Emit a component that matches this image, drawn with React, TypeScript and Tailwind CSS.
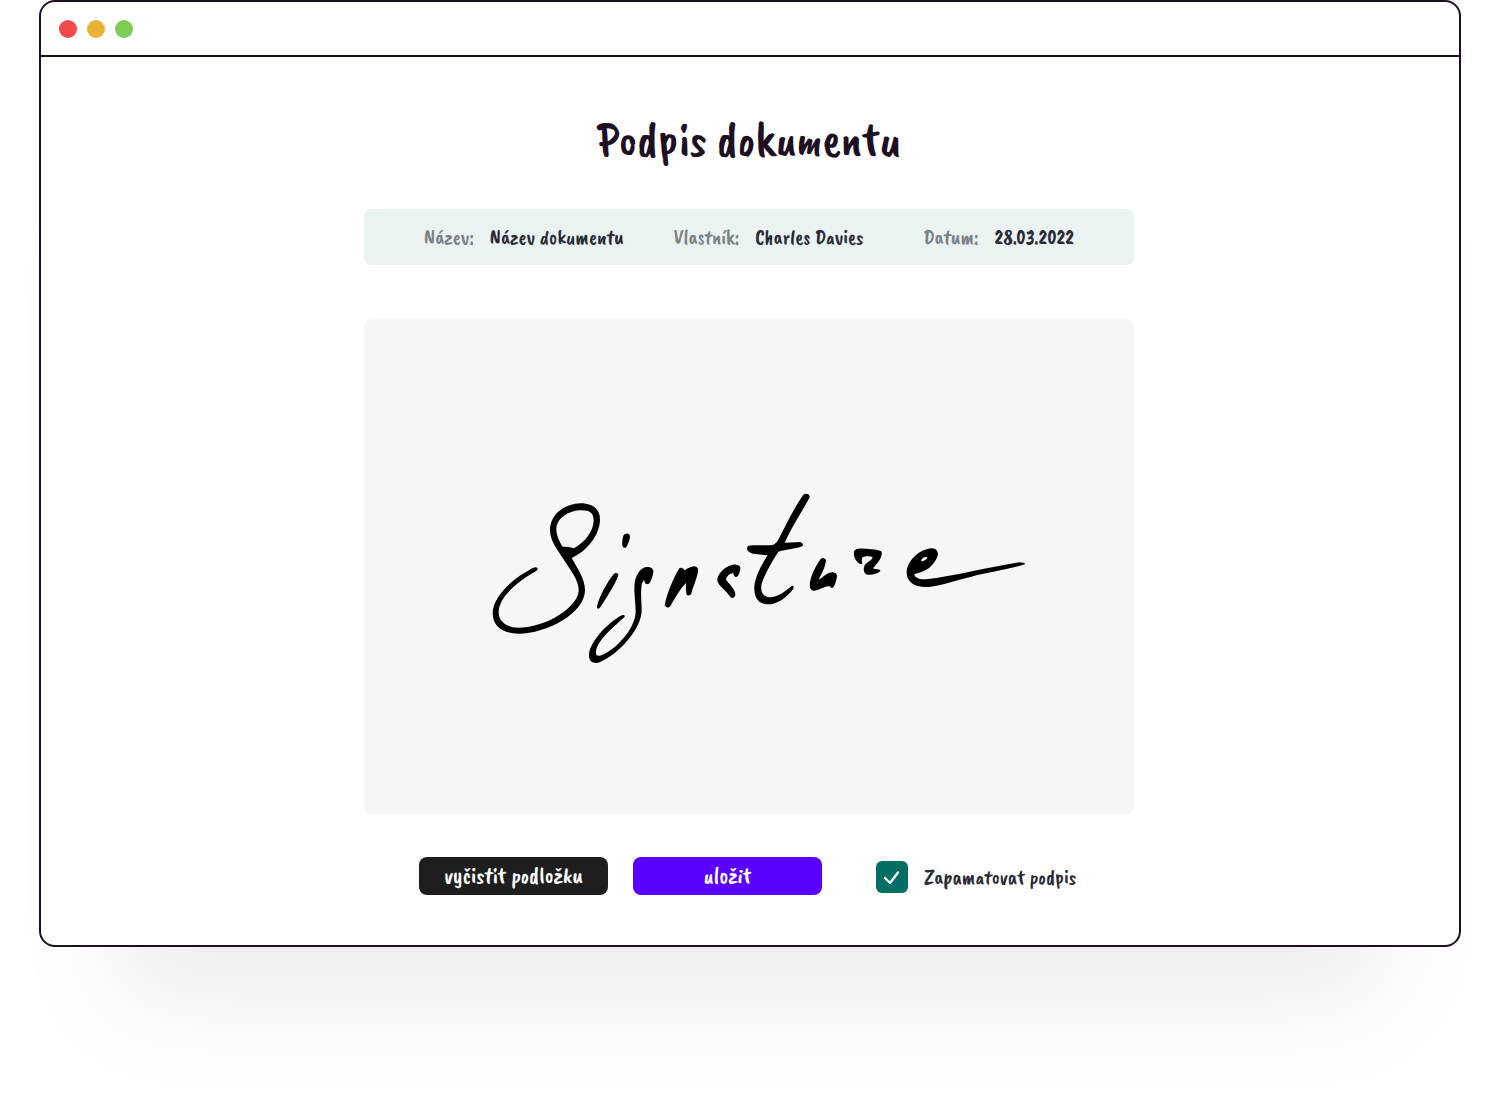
const details = [
  { label: "Název:", value: "Název dokumentu" },
  { label: "Vlastník:", value: "Charles Davies" },
  { label: "Datum:", value: "28.03.2022" },
];

function TitleBar() {
  return (
    <header className="flex h-[55px] items-center gap-2.5 border-b-2 border-[#1d1023] px-[18px]">
      <span className="size-[18px] rounded-full bg-[#f24a4a]" />
      <span className="size-[18px] rounded-full bg-[#eab234]" />
      <span className="size-[18px] rounded-full bg-[#7ccc55]" />
    </header>
  );
}

function Signature() {
  return (
    <svg viewBox="-33 -60 1680 640" className="w-[560px] max-w-full" role="img" aria-label="Signature" fill="#000">
      <path
        fillRule="evenodd"
        d="M164 262C112 286 38 344 38 400C38 440 70 461 115 461C200 461 315 400 315 330C315 295 290 262 275 234C320 215 360 165 360 118C360 85 335 70 302 70C250 72 210 105 210 150C210 185 235 212 252 240C270 268 296 300 296 330C296 380 200 443 115 443C80 443 56 425 56 397C56 350 118 300 170 272Q178 262 164 262ZM248 200C238 185 229 165 229 147C230 115 265 91 305 91C330 91 341 100 341 122C340 155 315 185 282 205C270 201 258 200 248 200Z"
      />
      <path d="M430 167C434 159 450 158 450 169C450 180 444 192 440 200C435 206 427 204 427 196C426 188 427 176 430 167Z" />
      <path d="M402 281C407 277 416 279 415 286C404 317 380 352 361 382C356 389 349 386 351 379C358 347 382 306 402 281Z" />
      <path d="M502 261C482 261 463 285 463 325C463 345 467 375 467 395C466 450 400 515 360 527C350 528 347 525 348 515C350 485 395 445 433 412Q437 404 428 405C400 415 328 480 327 525C326 545 340 551 355 548C410 528 485 450 485 390C485 370 482 340 484 325C484 312 487 305 493 300C493 315 505 316 511 306C515 297 521 280 520 272Q516 260 502 261Z" />
      <g transform="translate(480 0)">
        <path d="M118 265Q127 259 134 271C143 265 151 260 163 259Q176 260 174 274C171 297 158 322 154 341Q149 349 140 345Q136 327 138 309C120 327 104 356 91 379Q81 388 74 376C80 342 101 292 118 265Z" />
        <path d="M289 254C269 251 232 275 232 302C235 317 257 330 269 348C275 358 287 354 286 342C285 328 269 313 258 299C260 288 271 279 280 280C282 295 293 294 297 282C302 267 306 257 289 254Z" />
        <path d="M490 44C498 38 511 42 509 52C487 94 455 140 434 188L481 186Q491 190 488 198C471 206 438 208 415 215C394 248 369 291 364 317C361 344 377 355 397 351C419 347 437 333 456 317Q463 316 460 326C440 354 410 374 381 373C353 371 341 349 343 317C347 286 366 252 383 226L339 221C323 218 317 207 324 198C343 194 374 197 399 195C405 192 410 188 414 181C438 134 463 83 490 44Z" />
        <path d="M542 237Q550 230 558 239C557 261 544 281 536 299C550 292 564 275 579 277Q591 279 591 289C589 302 585 316 580 322Q575 327 569 319C556 315 538 332 520 332C508 330 509 317 510 307C515 281 529 255 542 237Z" />
      </g>
      <g transform="translate(930 120)">
        <path d="M192 96C194 87 205 85 222 86C240 86 265 89 274 94C279 104 271 122 249 145C256 149 271 146 271 153C262 162 246 166 232 164C219 160 220 145 224 136C232 125 246 121 248 111C239 107 224 108 217 112Q213 121 217 132C204 136 189 112 192 96Z" />
        <path
          fillRule="evenodd"
          d="M426 85C441 86 447 98 442 110C430 143 398 157 373 162C374 174 389 179 408 178C490 169 597 141 688 127Q702 127 706 132C663 148 602 155 544 170C506 178 457 196 422 200C377 204 351 189 350 158C350 124 389 86 426 85ZM393 124C395 114 405 108 412 112C411 119 400 125 393 124Z"
        />
      </g>
    </svg>
  );
}

export default function App() {
  return (
    <div className="min-h-screen bg-white px-[39px] pb-20 font-['Caveat_Brush',cursive] font-normal">
      <section className="rounded-2xl border-2 border-[#1d1023] bg-white shadow-[0_128px_100px_-75px_rgba(0,0,0,0.08)]">
        <TitleBar />
        <div className="pr-0.5">
          <main className="mx-auto flex max-w-[770px] flex-col pt-[52px] pb-[50px]">
            <h1 className="text-center text-[48px] leading-[60px] text-[#1d1023]">Podpis dokumentu</h1>

            <dl className="mt-10 grid h-14 grid-cols-[5fr_5fr_3fr] items-center rounded-lg bg-[#eaf2f2] px-[60px] pt-0.5 text-[21px] whitespace-nowrap">
              {details.map((item) => (
                <div key={item.label} className="flex gap-4">
                  <dt className="text-[#7d8286]">{item.label}</dt>
                  <dd className="text-[#2b2b37]">{item.value}</dd>
                </div>
              ))}
            </dl>

            <div className="mt-[54px] flex h-[495px] items-center justify-center rounded-lg bg-[#f6f6f6]">
              <Signature />
            </div>

            <div className="mt-[43px] flex items-center px-[55px]">
              <button type="button" className="h-[38px] w-[189px] rounded-lg bg-[#1e1e1e] pb-0.5 text-[23px] leading-none whitespace-nowrap text-white">
                vyčistit podložku
              </button>
              <button type="button" className="ml-[25px] h-[38px] w-[189px] rounded-lg bg-[#5a00ff] pb-0.5 text-[23px] leading-none text-white">
                uložit
              </button>
              <label className="ml-[54px] flex items-center gap-4 pt-0.5 text-[21px] whitespace-nowrap text-[#2b2b37]">
                <span className="relative block size-8">
                  <input type="checkbox" defaultChecked className="peer block size-8 appearance-none rounded-md bg-gray-300 checked:bg-[#036e64]" />
                  <svg
                    viewBox="0 0 32 32"
                    className="pointer-events-none absolute inset-0 hidden size-8 peer-checked:block"
                    fill="none"
                    stroke="#fff"
                    strokeWidth="2.3"
                    strokeLinecap="round"
                    strokeLinejoin="round"
                  >
                    <path d="M9 17L14 22L22 11.500" />
                  </svg>
                </span>
                <span className="pt-0.5">Zapamatovat podpis</span>
              </label>
            </div>
          </main>
        </div>
      </section>
    </div>
  );
}
